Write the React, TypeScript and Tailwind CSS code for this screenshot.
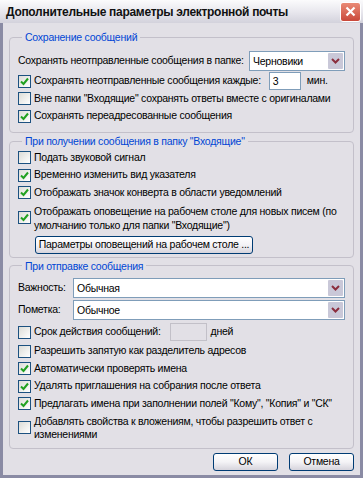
import * as React from "react";

const font = {
  fontFamily: '"Liberation Sans", Arial, sans-serif',
  letterSpacing: "-0.25px",
};

const Check: React.FC<{ checked?: boolean }> = ({ checked }) => (
  <span className="flex h-[13px] w-[13px] shrink-0 items-center justify-center border border-[#1c5180] bg-gradient-to-br from-[#dcdcd7] to-white">
    {checked && (
      <svg width="9" height="9" viewBox="0 0 9 9">
        <path d="M1 4.5 L3.5 7 L8 1.5" fill="none" stroke="#21a121" strokeWidth="2" />
      </svg>
    )}
  </span>
);

const Row: React.FC<{ checked?: boolean; children: React.ReactNode }> = ({
  checked,
  children,
}) => (
  <div className="flex h-[17.5px] items-center gap-[3px] whitespace-nowrap">
    <Check checked={checked} />
    <span>{children}</span>
  </div>
);

const Select: React.FC<{ value: string; className?: string }> = ({
  value,
  className,
}) => (
  <div
    className={
      "flex h-[20px] items-stretch border border-[#7f9db9] bg-white " +
      (className || "")
    }
  >
    <span className="flex-1 pl-[3px] leading-[18px]">{value}</span>
    <span className="m-[1px] flex w-[15px] items-center justify-center rounded-[1px] bg-[#c9c8d8]">
      <svg width="9" height="6" viewBox="0 0 9 6">
        <path d="M1 1 L4.5 4.5 L8 1" fill="none" stroke="#8b2e3e" strokeWidth="2" />
      </svg>
    </span>
  </div>
);

const Group: React.FC<{ title: string; children: React.ReactNode; className?: string }> = ({
  title,
  children,
  className,
}) => (
  <fieldset
    className={
      "rounded-[4px] border border-[#c3c0ca] px-[8px] " + (className || "")
    }
  >
    <legend className="ml-[4px] px-[3px] text-[#0046d5] leading-[14px] whitespace-nowrap">
      {title}
    </legend>
    {children}
  </fieldset>
);

const XpButton: React.FC<{ children: React.ReactNode; className?: string }> = ({
  children,
  className,
}) => (
  <button
    className={
      "flex items-center justify-center whitespace-nowrap rounded-[3px] border border-[#003c74] bg-gradient-to-b from-white via-[#f4f3f6] to-[#d6d4dc] " +
      (className || "")
    }
  >
    {children}
  </button>
);

export default function App() {
  return (
    <div
      className="flex h-[478px] w-[363px] flex-col overflow-hidden bg-[#8a8ba4] text-[10.5px] text-black"
      style={font}
    >
      {/* title bar */}
      <div className="flex h-[23px] shrink-0 items-center justify-between bg-gradient-to-b from-[#fbfbfc] via-[#e9e8ee] to-[#d3d2dc] pl-[6px] pr-[2px]">
        <span className="whitespace-nowrap text-[12px] font-bold tracking-[-0.3px] text-[#111]">
          Дополнительные параметры электронной почты
        </span>
        <span className="flex h-[20px] w-[21px] items-center justify-center rounded-[3px] border border-white bg-gradient-to-b from-[#e98a76] to-[#c9483a]">
          <svg width="11" height="11" viewBox="0 0 11 11">
            <path d="M1.5 1.5 L9.5 9.5 M9.5 1.5 L1.5 9.5" stroke="white" strokeWidth="2.2" />
          </svg>
        </span>
      </div>

      {/* body */}
      <div className="mx-[3px] mb-[3px] flex flex-1 flex-col bg-[#e2e0e6] px-[6px] pt-[7px]">
        <Group title="Сохранение сообщений" className="pb-[7px]">
          <div className="mt-[7px] flex h-[20px] items-center justify-between whitespace-nowrap">
            <span>Сохранять неотправленные сообщения в папке:</span>
            <Select value="Черновики" className="w-[96px]" />
          </div>
          <div className="mt-[1px] flex h-[18px] items-center gap-[3px] whitespace-nowrap">
            <Check checked />
            <span>Сохранять неотправленные сообщения каждые:</span>
            <span className="ml-[5px] h-[18px] w-[32px] border border-[#7f9db9] bg-white pl-[3px] leading-[16px]">
              3
            </span>
            <span className="ml-[3px]">мин.</span>
          </div>
          <Row>Вне папки "Входящие" сохранять ответы вместе с оригиналами</Row>
          <Row checked>Сохранять переадресованные сообщения</Row>
        </Group>

        <Group title={'При получении сообщения в папку "Входящие"'} className="mt-[1px] pb-[3px]">
          <div className="mt-[1px]" />
          <Row>Подать звуковой сигнал</Row>
          <Row checked>Временно изменить вид указателя</Row>
          <Row checked>Отображать значок конверта в области уведомлений</Row>
          <div className="mt-[2px] flex items-center gap-[3px] whitespace-nowrap">
            <Check checked />
            <span className="leading-[14px]">
              Отображать оповещение на рабочем столе для новых писем (по
              <br />
              умолчанию только для папки "Входящие")
            </span>
          </div>
          <XpButton className="ml-[17px] mt-[4px] h-[18px] w-[218px]">
            Параметры оповещений на рабочем столе ...
          </XpButton>
        </Group>

        <Group title="При отправке сообщения" className="mt-[1px] pb-[7px]">
          <div className="mt-[5px] flex h-[21px] items-center">
            <span className="w-[55px]">Важность:</span>
            <Select value="Обычная" className="flex-1" />
          </div>
          <div className="mt-[1px] flex h-[21px] items-center">
            <span className="w-[55px]">Пометка:</span>
            <Select value="Обычное" className="flex-1" />
          </div>
          <div className="mt-[1px] flex h-[21px] items-center gap-[3px] whitespace-nowrap">
            <Check />
            <span>Срок действия сообщений:</span>
            <span className="ml-[6px] h-[18px] w-[37px] border border-[#c2c0c8] bg-[#e2e0e6]" />
            <span className="ml-[1px]">дней</span>
          </div>
          <Row>Разрешить запятую как разделитель адресов</Row>
          <Row checked>Автоматически проверять имена</Row>
          <Row checked>Удалять приглашения на собрания после ответа</Row>
          <Row checked>Предлагать имена при заполнении полей "Кому", "Копия" и "СК"</Row>
          <div className="mt-[2px] flex items-center gap-[3px] whitespace-nowrap">
            <Check />
            <span className="leading-[13px]">
              Добавлять свойства к вложениям, чтобы разрешить ответ с
              <br />
              изменениями
            </span>
          </div>
        </Group>

        <div className="mt-[4px] flex justify-end gap-[11px]">
          <XpButton className="h-[18px] w-[65px]">ОК</XpButton>
          <XpButton className="h-[18px] w-[65px]">Отмена</XpButton>
        </div>
      </div>
    </div>
  );
}
